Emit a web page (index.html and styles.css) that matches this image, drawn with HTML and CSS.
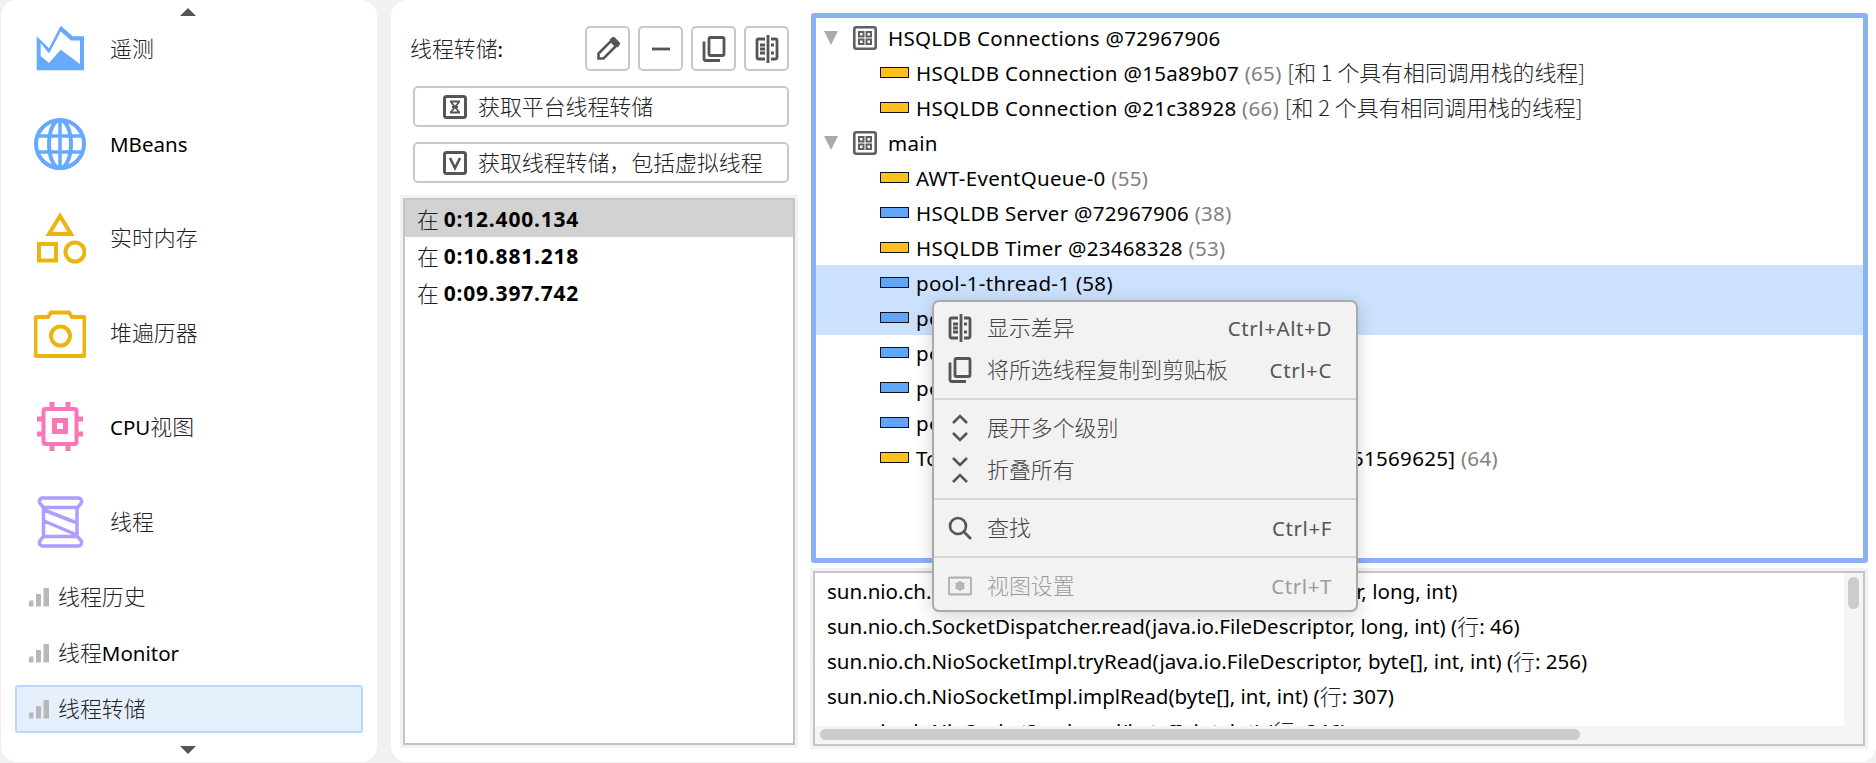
FILE: index.html
```html
<!DOCTYPE html>
<html lang="zh">
<head>
<meta charset="utf-8">
<title>线程转储</title>
<link rel="stylesheet" href="styles.css">
</head>
<body>
<svg class="defs" width="0" height="0">
  <symbol id="diff" viewBox="0 0 24 30">
    <path d="M10 5H3.5A1.5 1.5 0 0 0 2 6.5v17A1.5 1.5 0 0 0 3.500 25H10M13 1v28M16 5h4.500A1.500 1.500 0 0 1 22 6.500v17a1.500 1.500 0 0 1-1.500 1.500H16M5 11h5M5 15h5M5 19h5M16 11h3M16 19h3" fill="none" stroke="currentColor" stroke-width="2.800"/>
  </symbol>
  <symbol id="copy" viewBox="0 0 24 27">
    <path d="M8.500 2h12a1.500 1.500 0 0 1 1.500 1.500v15a1.500 1.500 0 0 1-1.500 1.500h-12A1.500 1.500 0 0 1 7 18.500v-15A1.500 1.500 0 0 1 8.500 2zM2 6v17.500A1.500 1.500 0 0 0 3.500 25H18" fill="none" stroke="currentColor" stroke-width="2.800"/>
  </symbol>
  <symbol id="group" viewBox="0 0 24 24">
    <rect x="1.300" y="1.300" width="21.400" height="21.400" rx="2" fill="none" stroke="currentColor" stroke-width="2.600"/>
    <path d="M6 6h4.500v4.500H6zM13.500 6H18v4.500h-4.500zM6 13.500h4.500V18H6zM13.500 13.500H18V18h-4.500z" fill="none" stroke="currentColor" stroke-width="2"/>
  </symbol>
  <symbol id="bars" viewBox="0 0 20 19">
    <path d="M0 13.500a1 1 0 0 1 1-1h3.500v6H1a1 1 0 0 1-1-1zM7 7a1 1 0 0 1 1-1h4v12.500H7zM14.500 1a1 1 0 0 1 1-1h3.500a1 1 0 0 1 1 1v17.500h-5.500z" fill="currentColor"/>
  </symbol>
</svg>

<div class="app">
  <nav class="sidebar">
    <span class="arrow arrow-up"></span>
    <a class="nav-item">
      <svg class="nav-icon blue" viewBox="0 0 52 52"><path fill-rule="evenodd" fill="currentColor" d="M2.700 13.300 15 25.300 26.700 2.700l12 10.600H50v34H2.700zM6.700 20v13L15 40l11.700-13.300L46 41V17.500h-9L26.700 8.500 15 30.500z"/></svg>
      <span class="t"><span class="zh">遥测</span></span>
    </a>
    <a class="nav-item">
      <svg class="nav-icon blue" viewBox="0 0 52 52" fill="none" stroke="currentColor" stroke-width="4"><circle cx="26" cy="26" r="24"/><ellipse cx="26" cy="26" rx="11" ry="24"/><path d="M26 2v48M3 18h46M3 34h46" stroke-width="3.500"/></svg>
      <span class="t">MBeans</span>
    </a>
    <a class="nav-item">
      <svg class="nav-icon yellow" viewBox="0 0 52 52" fill="none" stroke="currentColor" stroke-width="4"><path d="M26 4 37 22H15z"/><rect x="5" y="32" width="17" height="16.500"/><circle cx="41" cy="40" r="9.500"/></svg>
      <span class="t"><span class="zh">实时内存</span></span>
    </a>
    <a class="nav-item">
      <svg class="nav-icon yellow" viewBox="0 0 52 52" fill="none" stroke="currentColor" stroke-width="4"><path d="M3 10h11l3-4.500h18l3 4.500h11a1.500 1.500 0 0 1 1.500 1.500v36a1.500 1.500 0 0 1-1.500 1.500H3a1.500 1.500 0 0 1-1.500-1.500v-36A1.500 1.500 0 0 1 3 10z"/><circle cx="26.500" cy="29" r="9.500"/></svg>
      <span class="t"><span class="zh">堆遍历器</span></span>
    </a>
    <a class="nav-item">
      <svg class="nav-icon pink" viewBox="0 0 52 52" fill="none" stroke="currentColor" stroke-width="4"><rect x="9.500" y="8" width="33" height="35" rx="2"/><rect x="20.500" y="19.500" width="11" height="11" stroke-width="5"/><path d="M3 18h5M3 33h5M44 18h5M44 33h5M18 1v6M34 1v6M18 44v6M34 44v6" stroke-width="5"/></svg>
      <span class="t">CPU<span class="zh">视图</span></span>
    </a>
    <a class="nav-item">
      <svg class="nav-icon purple" viewBox="0 0 52 52" fill="none" stroke="currentColor" stroke-width="3.500"><path d="M8 2h36a3.500 3.500 0 0 1 2.500 6l-3 3.500H9.500l-3-3.500A3.500 3.500 0 0 1 8 2zM8 50h36a3.500 3.500 0 0 0 2.500-6l-3-3.500H9.500l-3 3.500A3.500 3.500 0 0 0 8 50zM9.500 11.500v29M43 11.500v29M10 14l33 13M10 25l33 14"/></svg>
      <span class="t"><span class="zh">线程</span></span>
    </a>
    <a class="sub-item first"><svg class="bars"><use href="#bars"/></svg><span class="t"><span class="zh">线程历史</span></span></a>
    <a class="sub-item"><svg class="bars"><use href="#bars"/></svg><span class="t"><span class="zh">线程</span>Monitor</span></a>
    <a class="sub-item sub-active"><svg class="bars"><use href="#bars"/></svg><span class="t"><span class="zh">线程转储</span></span></a>
    <span class="arrow arrow-down"></span>
  </nav>

  <main class="main">
    <section class="left">
      <div class="toolbar">
        <span class="t"><span class="zh">线程转储</span>:</span>
        <div class="tools">
          <button class="tool"><svg class="tool-icon" viewBox="0 0 24 24" fill="none" stroke="currentColor" stroke-width="2.600"><path d="M2.500 21.500v-5L15 4l5 5L7.500 21.500z"/><path d="M15.500 2.500l2-1.500 5.500 5.500-1.500 2z" fill="currentColor"/></svg></button>
          <button class="tool"><svg class="tool-icon" viewBox="0 0 24 24"><path d="M3 12h18" stroke="currentColor" stroke-width="2.800"/></svg></button>
          <button class="tool"><svg class="tool-icon tall"><use href="#copy"/></svg></button>
          <button class="tool"><svg class="tool-icon tall"><use href="#diff"/></svg></button>
        </div>
      </div>
      <button class="wide"><svg class="wide-icon" viewBox="0 0 24 24" fill="none" stroke="currentColor"><rect x="1.500" y="1.500" width="21" height="21" rx="2" stroke-width="3"/><path d="M7 6.500h10M7 17.500h10M8 7l8 10M16 7 8 17M9 12h6" stroke-width="1.800"/></svg><span class="t"><span class="zh">获取平台线程转储</span></span></button>
      <button class="wide"><svg class="wide-icon" viewBox="0 0 24 24" fill="none" stroke="currentColor"><rect x="1.500" y="1.500" width="21" height="21" rx="2" stroke-width="3"/><path d="M7 7l5 10 5-10" stroke-width="2.600"/></svg><span class="t"><span class="zh">获取线程转储，包括虚拟线程</span></span></button>
      <div class="well dumps">
        <div class="dump dump-active"><span class="zh">在 </span><b>0:12.400.134</b></div>
        <div class="dump"><span class="zh">在 </span><b>0:10.881.218</b></div>
        <div class="dump"><span class="zh">在 </span><b>0:09.397.742</b></div>
      </div>
    </section>

    <section class="right">
      <div class="tree">
        <div class="row group"><span class="twisty"></span><svg class="group-icon"><use href="#group"/></svg><span class="t">HSQLDB Connections @72967906</span></div>
        <div class="row thread"><span class="state run"></span><span class="t">HSQLDB Connection @15a89b07 <i>(65)</i> <span class="zh">[和 1 个具有相同调用栈的线程]</span></span></div>
        <div class="row thread"><span class="state run"></span><span class="t">HSQLDB Connection @21c38928 <i>(66)</i> <span class="zh">[和 2 个具有相同调用栈的线程]</span></span></div>
        <div class="row group"><span class="twisty"></span><svg class="group-icon"><use href="#group"/></svg><span class="t">main</span></div>
        <div class="row thread"><span class="state run"></span><span class="t">AWT-EventQueue-0 <i>(55)</i></span></div>
        <div class="row thread"><span class="state net"></span><span class="t">HSQLDB Server @72967906 <i>(38)</i></span></div>
        <div class="row thread"><span class="state run"></span><span class="t">HSQLDB Timer @23468328 <i>(53)</i></span></div>
        <div class="row thread selected"><span class="state net"></span><span class="t">pool-1-thread-1 (58)</span></div>
        <div class="row thread selected"><span class="state net"></span><span class="t">pool-1-thread-2 (59)</span></div>
        <div class="row thread"><span class="state net"></span><span class="t">pool-1-thread-3 <i>(60)</i></span></div>
        <div class="row thread"><span class="state net"></span><span class="t">pool-1-thread-4 <i>(61)</i></span></div>
        <div class="row thread"><span class="state net"></span><span class="t">pool-1-thread-5 <i>(62)</i></span></div>
        <div class="row thread"><span class="state run"></span><span class="t">Tomcat Shutdown  Hook [java.lang.Thread@51569625] <i>(64)</i></span></div>
      </div>
      <div class="well stack">
        <div class="frames">
          <div class="frame">sun.nio.ch.SocketDispatcher.read0(java.io.FileDescriptor, long, int)</div>
          <div class="frame">sun.nio.ch.SocketDispatcher.read(java.io.FileDescriptor, long, int) (<span class="zh">行</span>: 46)</div>
          <div class="frame">sun.nio.ch.NioSocketImpl.tryRead(java.io.FileDescriptor, byte[], int, int) (<span class="zh">行</span>: 256)</div>
          <div class="frame">sun.nio.ch.NioSocketImpl.implRead(byte[], int, int) (<span class="zh">行</span>: 307)</div>
          <div class="frame">sun.nio.ch.NioSocketImpl.read(byte[], int, int) (<span class="zh">行</span>: 346)</div>
        </div>
        <div class="vbar"><span class="vthumb"></span></div>
        <div class="hbar"><span class="hthumb"></span></div>
      </div>
    </section>
  </main>
</div>

<div class="menu">
  <div class="menu-item"><svg class="menu-icon"><use href="#diff"/></svg><span class="t"><span class="zh">显示差异</span></span><span class="t key">Ctrl+Alt+D</span></div>
  <div class="menu-item"><svg class="menu-icon"><use href="#copy"/></svg><span class="t"><span class="zh">将所选线程复制到剪贴板</span></span><span class="t key">Ctrl+C</span></div>
  <div class="sep"></div>
  <div class="menu-item"><svg class="menu-icon" viewBox="0 0 24 30" fill="none" stroke="currentColor" stroke-width="2.600"><path d="M5 10l7-7 7 7M5 20l7 7 7-7"/></svg><span class="t"><span class="zh">展开多个级别</span></span></div>
  <div class="menu-item"><svg class="menu-icon" viewBox="0 0 24 30" fill="none" stroke="currentColor" stroke-width="2.600"><path d="M5 3l7 7 7-7M5 27l7-7 7 7"/></svg><span class="t"><span class="zh">折叠所有</span></span></div>
  <div class="sep"></div>
  <div class="menu-item"><svg class="menu-icon" viewBox="0 0 24 24" fill="none" stroke="currentColor" stroke-width="2.600"><circle cx="10" cy="10" r="8"/><path d="M15.500 15.500 23 23"/></svg><span class="t"><span class="zh">查找</span></span><span class="t key">Ctrl+F</span></div>
  <div class="sep"></div>
  <div class="menu-item disabled"><svg class="menu-icon" viewBox="0 0 26 24" fill="none" stroke="currentColor"><rect x="1" y="3" width="24" height="18" rx="1.500" stroke-width="2.500"/><circle cx="13" cy="12" r="3.500" stroke-width="2.500"/><path d="M13 6.500v11M8 9l10 6M18 9 8 15" stroke-width="1.600"/></svg><span class="t"><span class="zh">视图设置</span></span><span class="t key">Ctrl+T</span></div>
</div>
</body>
</html>
```
FILE: styles.css
```css
* { box-sizing: border-box; }
html, body { margin: 0; height: 763px; overflow: hidden; }
body {
  background: #f1f1f1;
  color: #000;
  font-family: "Noto Sans", "Noto Sans CJK SC", sans-serif;
  font-size: 20.500px;
  line-height: 28px;
}
.t { display: block; white-space: pre; }
.zh {
  font-family: "Noto Sans CJK SC", sans-serif;
  font-size: 21.900px;
  line-height: 1;
  letter-spacing: 0;
  color: #222;
  font-weight: 300;
}
i { font-style: normal; color: #808080; }
.defs { display: block; position: absolute; }
button { font: inherit; color: inherit; background: #fff; padding: 0; }

.app { display: flex; gap: 14px; height: 762px; padding-left: 1px; }

/* sidebar */
.sidebar {
  position: relative;
  width: 376px;
  flex: none;
  background: #fff;
  border-radius: 16px;
  padding: 2px 14px 0;
  display: flex;
  flex-direction: column;
}
.arrow { position: absolute; left: 179px; width: 0; height: 0; border-left: 8px solid transparent; border-right: 8px solid transparent; }
.arrow-up { top: 8px; border-bottom: 8px solid #555; }
.arrow-down { bottom: 8px; border-top: 8px solid #555; }
.nav-item { height: 94.500px; display: flex; align-items: center; gap: 24px; padding-left: 19px; flex: none; }
.nav-icon { width: 52px; height: 52px; flex: none; }
.blue { color: #66a9ff; }
.yellow { color: #ecb40f; }
.pink { color: #f977b8; }
.purple { color: #b19cff; }
.sub-item {
  height: 48px;
  margin-bottom: 8px;
  display: flex;
  align-items: center;
  gap: 9px;
  padding-left: 12px;
  border: 2px solid transparent;
  border-radius: 3px;
  flex: none;
}
.sub-item.first { margin-top: 4px; }
.sub-active { background: #e6f0fd; border-color: #bad8ff; }
.bars { width: 20px; height: 19px; color: #b8b8b8; flex: none; }

/* main */
.main {
  flex: 1;
  min-width: 0;
  background: #fff;
  border-radius: 16px 0 16px 16px;
  padding: 13px 8px 14px 9px;
  display: flex;
  gap: 12px;
}
.left { width: 399px; flex: none; display: flex; flex-direction: column; }
.toolbar { display: flex; align-items: center; justify-content: space-between; padding: 13px 10px 0 10px; }
.tools { display: flex; gap: 8px; }
.tool, .wide { border: 2px solid #c8c8c8; border-radius: 5px; color: #555; }
.tool { width: 45px; height: 45px; display: flex; align-items: center; justify-content: center; }
.tool-icon { width: 24px; height: 24px; }
.tool-icon.tall { height: 30px; }
.wide {
  height: 41px;
  margin: 15px 10px 0 13px;
  padding-left: 28px;
  display: flex;
  align-items: center;
  gap: 11px;
  flex: none;
}
.wide-icon { width: 24px; height: 24px; flex: none; }
.well { background: #fff; border: 2px solid #c4c4c4; outline: 3px solid #f2f2f2; outline-offset: 0; }
.dumps { flex: 1; margin: 15px 4px 3px 3px; }
.dump { height: 37px; display: flex; align-items: center; padding-left: 12px; white-space: pre; }
.dump b { font-weight: 700; font-size: 21px; letter-spacing: .8px; }
.dump-active { background: #d2d2d2; }

.right { flex: 1; min-width: 0; display: flex; flex-direction: column; }
.tree {
  height: 550px;
  flex: none;
  border: 5px solid #8ab2f2;
  border-radius: 3px;
  padding-top: 2px;
  overflow: hidden;
  letter-spacing: .3px;
}
.row { height: 35px; display: flex; align-items: center; }
.group { padding-left: 8px; }
.twisty { width: 0; height: 0; border-left: 7.500px solid transparent; border-right: 7.500px solid transparent; border-top: 14px solid #aaa; margin-right: 15px; }
.group-icon { width: 24px; height: 24px; color: #5f5f5f; margin-right: 11px; flex: none; }
.thread { padding-left: 64px; }
.state { width: 29px; height: 11px; border: 1.500px solid #111; margin-right: 7px; flex: none; }
.run { background: #ffbf1f; }
.net { background: #60a5f8; }
.selected { background: #cce1fd; }

.stack {
  height: 175px;
  flex: none;
  margin: 8px 3px 0 2px;
  display: grid;
  grid-template-columns: 1fr 19px;
  grid-template-rows: 1fr 18px;
}
.frames { overflow: hidden; min-height: 0; }
.frame { height: 35px; display: flex; align-items: center; padding-left: 12px; white-space: pre; }
.vbar { grid-column: 2; grid-row: 1 / 3; background: #f5f5f5; padding: 4px 4px 0; }
.vthumb { display: block; height: 32px; border-radius: 6px; background: #ccc; }
.hbar { grid-column: 1; grid-row: 2; background: #f5f5f5; padding: 3px 5px; }
.hthumb { display: block; width: 760px; height: 11px; border-radius: 6px; background: #ccc; }

/* context menu */
.menu {
  position: absolute;
  left: 932px;
  top: 300px;
  width: 426px;
  height: 312px;
  background: #f2f2f2;
  border: 2px solid #aaa;
  border-radius: 7px;
  padding: 5px 0 4px;
  box-shadow: 0 4px 18px rgba(0, 0, 0, .18);
  color: #444;
}
.menu .zh { color: #444; }
.menu-item { height: 42px; display: flex; align-items: center; padding: 0 24px 0 14px; }
.menu-icon { width: 24px; height: 30px; margin-right: 15px; flex: none; color: #555; }
.t.key { margin-left: auto; color: #555; letter-spacing: .6px; }
.sep { height: 2px; margin: 7px 0; background: #d6d6d6; }
.disabled .zh, .disabled .key { color: #9c9c9c; }
.disabled .menu-icon { color: #b4b4b4; }
```
